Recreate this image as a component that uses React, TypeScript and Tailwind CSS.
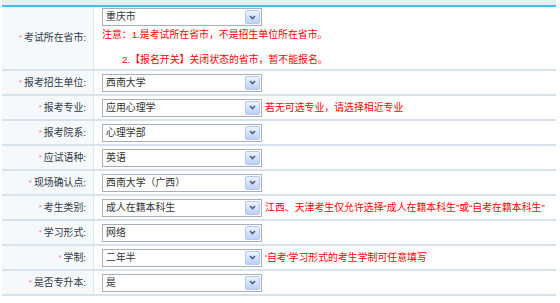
import React from "react";

type Row = { label: string; value: string; hint?: string };

const ROWS: Row[] = [
  { label: "报考招生单位:", value: "西南大学" },
  { label: "报考专业:", value: "应用心理学", hint: "若无可选专业，请选择相近专业" },
  { label: "报考院系:", value: "心理学部" },
  { label: "应试语种:", value: "英语" },
  { label: "现场确认点:", value: "西南大学（广西）" },
  { label: "考生类别:", value: "成人在籍本科生", hint: "江西、天津考生仅允许选择“成人在籍本科生”或“自考在籍本科生”" },
  { label: "学习形式:", value: "网络" },
  { label: "学制:", value: "二年半", hint: "'自考'学习形式的考生学制可任意填写" },
  { label: "是否专升本:", value: "是" },
];

function FakeSelect({ value }: { value: string }) {
  return (
    <div className="flex h-[18px] w-[160px] shrink-0 items-center justify-between border border-[#a7b0ba] bg-white pl-[3px]">
      <span className="text-[#333]">{value}</span>
      <span className="mr-[1px] flex h-[14px] w-[15px] items-center justify-center rounded-[2px] border border-[#b5c7ef] bg-gradient-to-b from-[#eef3fe] to-[#bcd0fa]">
        <svg width="7" height="5" viewBox="0 0 7 5">
          <path d="M1 1 L3.5 3.5 L6 1" fill="none" stroke="#4a5f86" strokeWidth="1.6" />
        </svg>
      </span>
    </div>
  );
}

function Label({ text }: { text: string }) {
  return (
    <div className="flex w-[92px] shrink-0 items-center justify-end border-r border-[#dfe7f0] bg-[#f6f9fc] pr-[7px] text-[#2f3a48]">
      <span className="mr-[2px] text-[8px] text-[#f47a8e]">*</span>
      {text}
    </div>
  );
}

export default function App() {
  return (
    <div
      className="h-[303px] w-[560px] overflow-hidden bg-white text-[9.9px] leading-[12px]"
      style={{ fontFamily: '"Liberation Sans", "Noto Sans CJK SC", sans-serif' }}
    >
      <div className="ml-[2px] w-[554px]">
        <div className="h-[5px] bg-[#e9eef3]" />
        <div className="h-[2px] bg-[#3fc1ee]" />

        <div className="flex h-[64px] border-b-2 border-[#d8e2ed]">
          <Label text="考试所在省市:" />
          <div className="flex flex-col pl-[8px] pt-[1px]">
            <FakeSelect value="重庆市" />
            <p className="mt-[3px] text-[#ff0000]">注意：1.是考试所在省市，不是招生单位所在省市。</p>
            <p className="mt-[13px] pl-[20px] text-[#ff0000]">2.【报名开关】关闭状态的省市，暂不能报名。</p>
          </div>
        </div>

        {ROWS.map((r) => (
          <div key={r.label} className="flex h-[25px] border-b-2 border-[#d8e2ed]">
            <Label text={r.label} />
            <div className="flex items-center pl-[8px]">
              <FakeSelect value={r.value} />
              {r.hint && <span className="ml-[3px] whitespace-nowrap text-[#ff0000]">{r.hint}</span>}
            </div>
          </div>
        ))}
      </div>
    </div>
  );
}
